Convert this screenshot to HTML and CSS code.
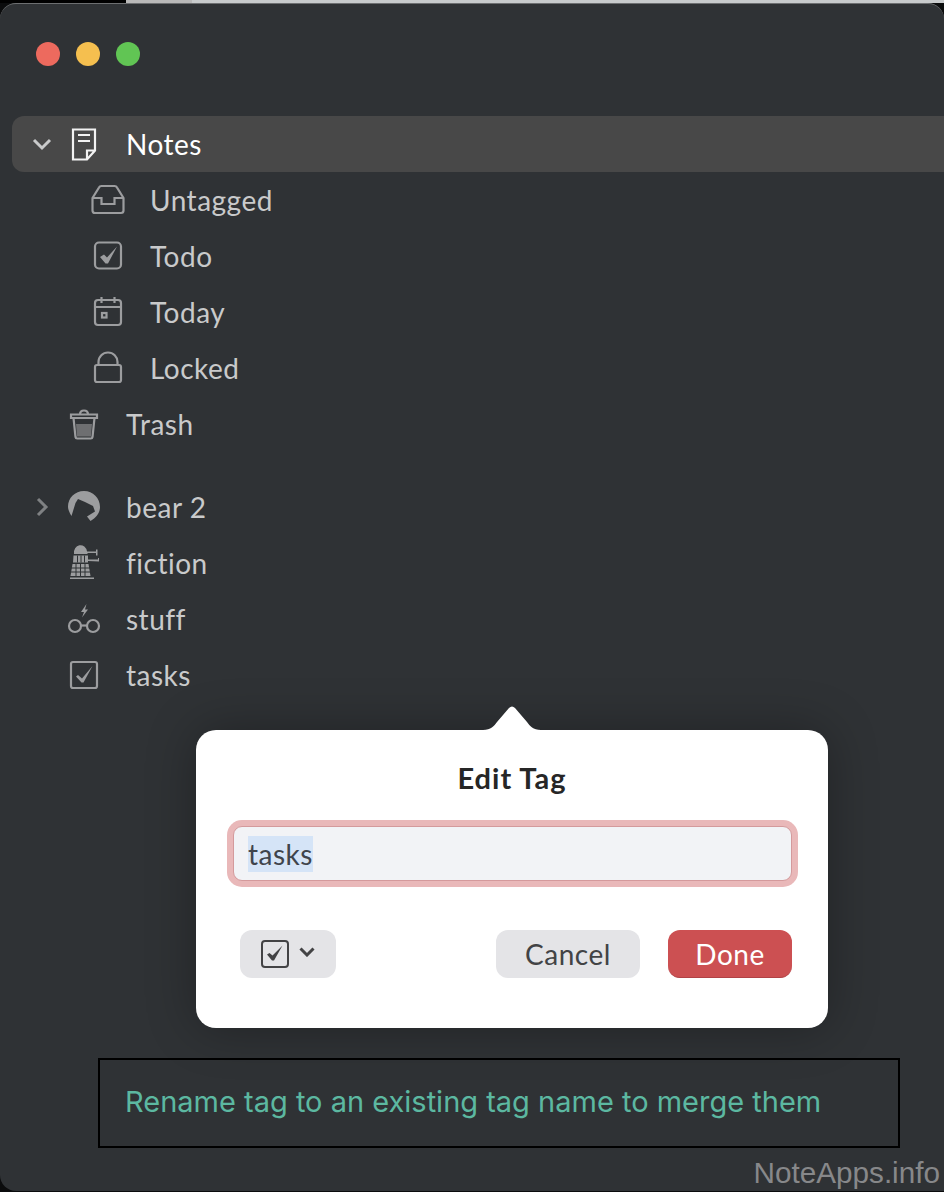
FILE: index.html
```html
<!DOCTYPE html>
<html lang="en">
<head>
  <meta charset="UTF-8" />
  <title>Edit Tag</title>
  <link rel="stylesheet" href="styles.css">
</head>
<body>
  <div class="strip">
    <span class="strip-dark"></span>
    <span class="strip-mid"></span>
    <span class="strip-light"></span>
  </div>

  <div class="window">
    <div class="titlebar">
      <span class="light red"></span>
      <span class="light yellow"></span>
      <span class="light green"></span>
    </div>

    <ul class="list">
      <li class="row active">
        <svg class="chev" viewBox="0 0 24 24"><path d="M4 8l8 8 8-8" /></svg>
        <svg class="icon" viewBox="0 0 32 32"><path d="M5 1.500h22v21l-8 9H5z M19 31v-8.500h8 M10 7h12 M10 13h12" /></svg>
        <span class="label">Notes</span>
      </li>
      <li class="row sub">
        <span class="chev"></span>
        <svg class="icon" viewBox="0 0 32 32"><path d="M0.500 14L7 3.500Q7.700 2 9.500 2h13q1.800 0 2.500 1.500L31.500 14v12.500q0 2.500-2.500 2.500H3q-2.500 0-2.500-2.500z M0.500 14H9.500v6h13v-6h9" /></svg>
        <span class="label">Untagged</span>
      </li>
      <li class="row sub">
        <span class="chev"></span>
        <svg class="icon" viewBox="0 0 32 32"><rect x="3" y="2.500" width="26" height="26" rx="4" /><path class="fill" d="M8 17L12 14.500l3 3L25 6.500 16 23.500h-2.500z" /></svg>
        <span class="label">Todo</span>
      </li>
      <li class="row sub">
        <span class="chev"></span>
        <svg class="icon" viewBox="0 0 32 32"><rect x="3" y="4" width="26" height="25" rx="3" /><path d="M3 11h26 M9.500 1v6 M22.500 1v6" /><rect x="10" y="17" width="4.500" height="4.500" /></svg>
        <span class="label">Today</span>
      </li>
      <li class="row sub">
        <span class="chev"></span>
        <svg class="icon" viewBox="0 0 32 32"><rect x="3" y="13" width="26" height="17" rx="2" /><path d="M6.500 13V10a9.500 9.500 0 0 1 19 0V13" /></svg>
        <span class="label">Locked</span>
      </li>
      <li class="row">
        <span class="chev"></span>
        <svg class="icon" viewBox="0 0 32 32"><path d="M3 6.500h26v3.500H3z M5.500 10l2 19q.2 1.500 1.700 1.500h13.600q1.500 0 1.700-1.500l2-19 M12 6.500q0-4 4-4t4 4" /><path class="fill dim" d="M8 16h16l-1 12.500H9z" /></svg>
        <span class="label">Trash</span>
      </li>

      <li class="row tag first">
        <svg class="chev muted" viewBox="0 0 24 24"><path d="M8 4l8 8-8 8" /></svg>
        <svg class="icon" viewBox="0 0 32 32"><path class="fill" d="M3.500 25C1 21 0 18 0 15.500 0 7 7 0 16 0c9 0 16 7 16 16 0 6-4 11-9.500 14L19 25.500 27 20.500 25 15 17 11 10 8 7.500 12z" /></svg>
        <span class="label">bear 2</span>
      </li>
      <li class="row tag">
        <span class="chev"></span>
        <svg class="icon" viewBox="0 0 32 32">
          <path class="fill" d="M6 7a6.500 7.500 0 0 1 13-2.500h9V2.500h1.500v6H28v-2.500H19.500L19.500 7z M5.500 8.500h14.500v4h10v-1.500h1v3.500l-11-.500v1.500H5z M4.500 17h16l2 12H2.500z M2 30.500h24V32H2z" />
          <path class="cut" d="M9.500 8.500v7 M13 8.500v7 M16.500 8.500v7 M3 21h19 M3 25h19 M8 17v12 M12.500 17v12 M17 17v12" />
        </svg>
        <span class="label">fiction</span>
      </li>
      <li class="row tag">
        <span class="chev"></span>
        <svg class="icon" viewBox="0 0 32 32"><circle cx="7" cy="23" r="6" /><circle cx="25" cy="23" r="6" /><path d="M13 22.500h6" /><path class="fill" d="M18.500 1l-5.500 8h3l-2 5.500 6-8h-3z" /></svg>
        <span class="label">stuff</span>
      </li>
      <li class="row tag">
        <span class="chev"></span>
        <svg class="icon" viewBox="0 0 32 32"><rect x="3" y="3" width="26" height="26" rx="2" /><path class="fill" d="M8 17.500l2-1.500 4 3.500L24.500 7 15.500 23.500h-2z" /></svg>
        <span class="label">tasks</span>
      </li>
    </ul>
  </div>

  <div class="dialog">
    <svg class="dialog-tip" viewBox="0 0 58 25"><path d="M0 25V24C8 24 11 20 14 16L26 2Q29-1 32 2L44 16C47 20 50 24 58 24V25z" /></svg>
    <div class="dialog-title">Edit Tag</div>
    <div class="field"><span class="field-text">tasks</span></div>
    <div class="dialog-foot">
      <button class="btn btn-icon" type="button">
        <svg class="btn-check" viewBox="0 0 28 28"><rect x="1" y="1" width="26" height="26" rx="3" /><path class="fill" d="M6 14.500l2.500-1.500 3 2.500L21.500 5.500 13 20.500h-2z" /></svg>
        <svg class="btn-chev" viewBox="0 0 16 10"><path d="M1.500 1.500L8 8l6.500-6.500" /></svg>
      </button>
      <span class="spacer"></span>
      <button class="btn btn-cancel" type="button">Cancel</button>
      <button class="btn btn-done" type="button">Done</button>
    </div>
  </div>

  <div class="hint">Rename tag to an existing tag name to merge them</div>
  <div class="watermark">NoteApps.info</div>
</body>
</html>
```

FILE: styles.css
```css
* { box-sizing: border-box; }
body {
  margin: 0;
  height: 1192px;
  overflow: hidden;
  position: relative;
  background: #0b0c0d;
  font-family: "Lato", sans-serif;
  letter-spacing: 0.5px;
}

/* bit of the desktop above the window */
.strip { display: flex; height: 3px; }
.strip-dark { width: 126px; background: #000; }
.strip-mid { width: 66px; background: #b9b9b9; }
.strip-light { flex: 1; background: #c8cbcc; }

.window {
  height: 1188px;
  background: #2f3235;
  border-top: 1px solid #6d6f71;
  border-radius: 16px 16px 0 16px;
}
.titlebar {
  display: flex;
  gap: 16px;
  padding: 38px 0 0 36px;
  height: 112px;
}
.light { width: 24px; height: 24px; border-radius: 50%; }
.red { background: #ed6a5e; }
.yellow { background: #f5bf4f; }
.green { background: #61c554; }

.list { list-style: none; margin: 0; padding: 0; }
.row {
  display: flex;
  align-items: center;
  height: 56px;
  margin-left: 12px;
  padding-left: 18px;
  font-size: 28px;
  color: #c9cacb;
}
.row.active {
  background: #484848;
  border-radius: 12px 0 0 12px;
  color: #fff;
}
.row.first { margin-top: 27px; }
.row.sub { padding-left: 42px; }

.chev { width: 24px; height: 24px; flex: none; fill: none; stroke: #c9cacb; stroke-width: 3; }
.chev.muted { stroke: #7f8183; }
.icon {
  width: 32px;
  height: 32px;
  flex: none;
  margin-left: 14px;
  overflow: visible;
  fill: none;
  stroke: #9c9d9f;
  stroke-width: 2.2;
}
.active .icon { stroke: #f2f2f2; }
.icon .fill { fill: #9c9d9f; stroke: none; }
.icon .fill.dim { fill: #6e6f71; }
.icon .cut { stroke: #2f3235; stroke-width: 1; }
.label { margin-left: 26px; }

.dialog {
  position: absolute;
  left: 196px;
  top: 730px;
  width: 632px;
  height: 298px;
  padding-top: 31px;
  background: #fff;
  border-radius: 20px;
  box-shadow: 0 0 50px rgba(0, 0, 0, 0.3);
}
.dialog-tip {
  position: absolute;
  left: 287px;
  top: -24px;
  width: 58px;
  height: 25px;
  fill: #fff;
}
.dialog-title {
  height: 34px;
  line-height: 34px;
  text-align: center;
  font-size: 29px;
  font-weight: 700;
  letter-spacing: 1px;
  color: #262626;
}
.field {
  display: flex;
  align-items: center;
  height: 55px;
  margin: 31px 36px 0 37px;
  padding-left: 14px;
  background: #f2f3f6;
  border: 1px solid #d49a9c;
  border-radius: 9px;
  box-shadow: 0 0 0 6px #e9b8b9;
  font-size: 28px;
  color: #3f444c;
}
.field-text { background: #d5e4f7; line-height: 36px; }
.dialog-foot {
  display: flex;
  gap: 28px;
  margin-top: 49px;
  padding: 0 36px 0 44px;
}
.spacer { flex: 1; }
.btn {
  height: 48px;
  padding: 0;
  border: none;
  border-radius: 12px;
  font-family: inherit;
  font-size: 28px;
  letter-spacing: inherit;
  background: #e4e4e7;
  color: #424345;
}
.btn-icon {
  display: flex;
  align-items: center;
  justify-content: center;
  gap: 10px;
  width: 96px;
}
.btn-check { width: 28px; height: 28px; fill: none; stroke: #434345; stroke-width: 2; }
.btn-check .fill { fill: #434345; stroke: none; }
.btn-chev { width: 16px; height: 10px; margin-top: -4px; fill: none; stroke: #434345; stroke-width: 3; }
.btn-cancel { width: 144px; }
.btn-done {
  width: 124px;
  background: #cc5052;
  border-bottom: 1px solid #b04245;
  color: #fff;
}

/* annotation box added on top of the screenshot */
.hint {
  position: absolute;
  left: 98px;
  top: 1058px;
  width: 802px;
  height: 90px;
  padding-left: 25px;
  line-height: 84px;
  border: 2px solid #000;
  font-family: "Inter", sans-serif;
  font-size: 29px;
  letter-spacing: 0;
  color: #5cb8a1;
}
.watermark {
  position: absolute;
  right: 4px;
  top: 1156px;
  font-family: "Liberation Sans", sans-serif;
  font-size: 29.7px;
  letter-spacing: 0;
  line-height: 34px;
  color: #87888a;
}
```
